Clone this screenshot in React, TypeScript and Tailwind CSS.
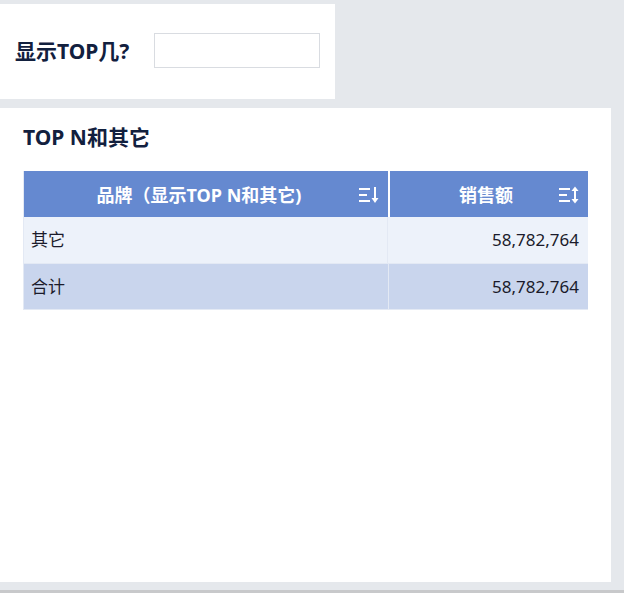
const font = { fontFamily: '"Noto Sans", "Noto Sans CJK SC", sans-serif' };

function SortDownIcon() {
  return (
    <svg width="22" height="20" viewBox="0 0 22 20" fill="none">
      <g stroke="white" strokeWidth="2">
        <line x1="1" y1="4" x2="12" y2="4" />
        <line x1="1" y1="10" x2="9" y2="10" />
        <line x1="1" y1="16" x2="12" y2="16" />
        <line x1="17" y1="2" x2="17" y2="15" />
      </g>
      <path d="M13.5 13 L17 18 L20.5 13 Z" fill="white" />
    </svg>
  );
}

function SortBothIcon() {
  return (
    <svg width="22" height="20" viewBox="0 0 22 20" fill="none">
      <g stroke="white" strokeWidth="2">
        <line x1="1" y1="4" x2="12" y2="4" />
        <line x1="1" y1="10" x2="9" y2="10" />
        <line x1="1" y1="16" x2="12" y2="16" />
        <line x1="17" y1="5" x2="17" y2="15" />
      </g>
      <path d="M13.5 6 L17 1.5 L20.5 6 Z" fill="white" />
      <path d="M13.5 14 L17 18.5 L20.5 14 Z" fill="white" />
    </svg>
  );
}

export default function App() {
  return (
    <div className="w-[624px] h-[593px] bg-[#e5e8ec] flex flex-col overflow-hidden" style={font}>
      {/* filter card */}
      <div className="mt-[4px] w-[335px] h-[95px] bg-white flex items-center pl-[15px]">
        <span className="text-[21px] font-bold text-[#12203e] w-[139px]">显示TOP几?</span>
        <input className="w-[166px] h-[35px] -mt-[2px] border border-[#d9dce1] bg-white outline-none" />
      </div>

      {/* table card */}
      <div className="mt-[9px] w-[611px] h-[474px] bg-white pt-[14px] pl-[23px]">
        <div className="text-[21px] font-bold text-[#12203e] h-[30px] leading-[30px]">TOP N和其它</div>
        <div className="mt-[19px] w-[565px] border-l border-b border-[#e3e9f4]">
          <div className="flex h-[46px] bg-[#6589d0] text-white text-[18px] font-bold">
            <div className="w-[364px] flex items-center pr-[8px] pt-[2px]">
              <span className="flex-1 text-center pl-[16px]">品牌（显示TOP N和其它)</span>
              <SortDownIcon />
            </div>
            <div className="w-[2px] bg-white" />
            <div className="flex-1 flex items-center pr-[8px] pt-[2px]">
              <span className="flex-1 text-center pl-[24px]">销售额</span>
              <SortBothIcon />
            </div>
          </div>
          <div className="flex h-[47px] bg-[#edf2fa] text-[17px] text-[#1b1b2b] border-b border-[#e3e9f4]">
            <div className="w-[364px] flex items-center pl-[7px] border-r border-[#e3e9f4]">其它</div>
            <div className="flex-1 flex items-center justify-end pr-[9px]">58,782,764</div>
          </div>
          <div className="flex h-[45px] bg-[#c9d5ed] text-[17px] text-[#1b1b2b]">
            <div className="w-[365px] flex items-center pl-[7px] border-r border-[#e3e9f4]">合计</div>
            <div className="flex-1 flex items-center justify-end pr-[9px]">58,782,764</div>
          </div>
        </div>
      </div>

      <div className="flex-1" />
      <div className="h-[3px] bg-[#c8c9cb]" />
    </div>
  );
}
